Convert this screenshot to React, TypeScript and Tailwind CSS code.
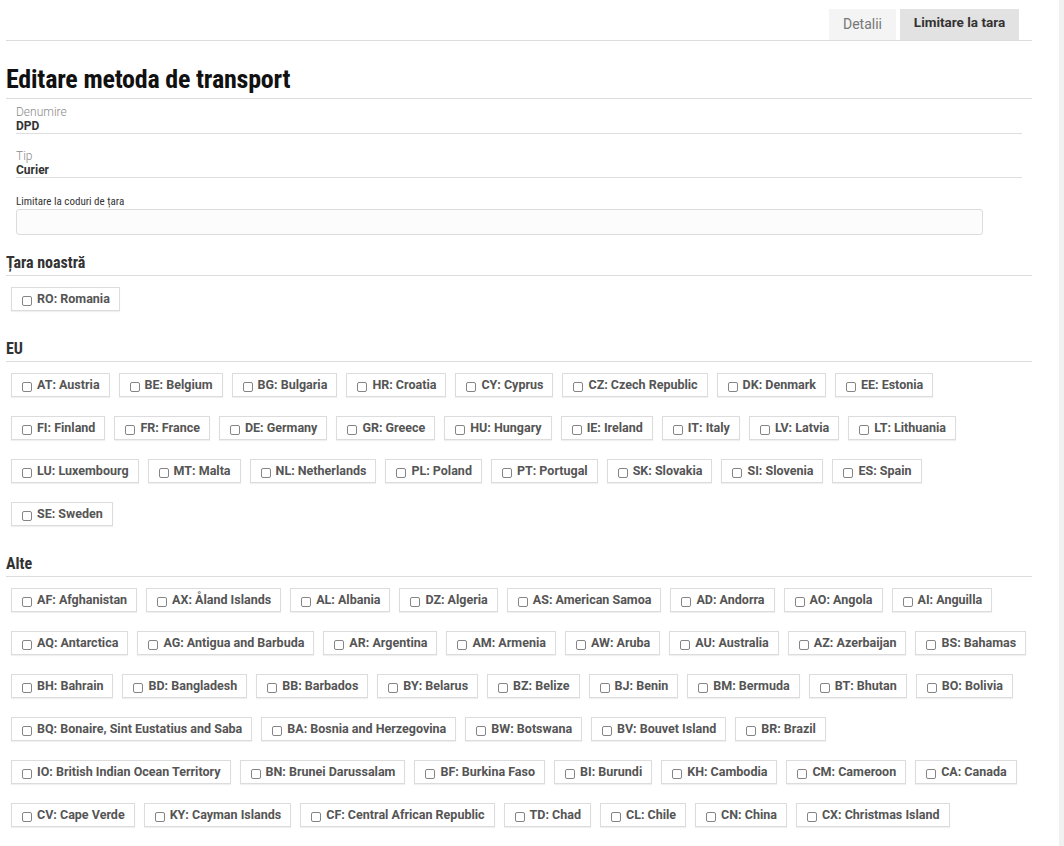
import React from 'react';

type Section = {
  title: string;
  rows: string[][];
};

const sections: Section[] = [
  {
    title: 'Țara noastră',
    rows: [['RO: Romania']],
  },
  {
    title: 'EU',
    rows: [
      ['AT: Austria', 'BE: Belgium', 'BG: Bulgaria', 'HR: Croatia', 'CY: Cyprus', 'CZ: Czech Republic', 'DK: Denmark', 'EE: Estonia'],
      ['FI: Finland', 'FR: France', 'DE: Germany', 'GR: Greece', 'HU: Hungary', 'IE: Ireland', 'IT: Italy', 'LV: Latvia', 'LT: Lithuania'],
      ['LU: Luxembourg', 'MT: Malta', 'NL: Netherlands', 'PL: Poland', 'PT: Portugal', 'SK: Slovakia', 'SI: Slovenia', 'ES: Spain'],
      ['SE: Sweden'],
    ],
  },
  {
    title: 'Alte',
    rows: [
      ['AF: Afghanistan', 'AX: Åland Islands', 'AL: Albania', 'DZ: Algeria', 'AS: American Samoa', 'AD: Andorra', 'AO: Angola', 'AI: Anguilla'],
      ['AQ: Antarctica', 'AG: Antigua and Barbuda', 'AR: Argentina', 'AM: Armenia', 'AW: Aruba', 'AU: Australia', 'AZ: Azerbaijan', 'BS: Bahamas'],
      ['BH: Bahrain', 'BD: Bangladesh', 'BB: Barbados', 'BY: Belarus', 'BZ: Belize', 'BJ: Benin', 'BM: Bermuda', 'BT: Bhutan', 'BO: Bolivia'],
      ['BQ: Bonaire, Sint Eustatius and Saba', 'BA: Bosnia and Herzegovina', 'BW: Botswana', 'BV: Bouvet Island', 'BR: Brazil'],
      ['IO: British Indian Ocean Territory', 'BN: Brunei Darussalam', 'BF: Burkina Faso', 'BI: Burundi', 'KH: Cambodia', 'CM: Cameroon', 'CA: Canada'],
      ['CV: Cape Verde', 'KY: Cayman Islands', 'CF: Central African Republic', 'TD: Chad', 'CL: Chile', 'CN: China', 'CX: Christmas Island'],
    ],
  },
];

const narrow = "font-['Liberation_Sans_Narrow','Roboto_Condensed','Liberation_Sans',sans-serif]";

function CountryChip({ label }: { label: string }) {
  return (
    <label className="flex h-[24px] items-center border border-[#dcdcdc] bg-white pl-[10px] pr-[9px] shadow-[0_1px_1px_rgba(0,0,0,0.06)]">
      <span className="mr-[5px] mt-[3px] h-[10px] w-[10px] rounded-[2px] border border-[#858585] bg-white" />
      <span className="whitespace-nowrap text-[12.5px] font-bold leading-none text-[#555]">{label}</span>
    </label>
  );
}

function Field({ label, value }: { label: string; value: string }) {
  return (
    <div className="ml-[10px] mr-[10px] border-b border-[#dedede] pt-[6px]">
      <div className="text-[12px] font-light leading-[14px] text-[#8a8a8a]">{label}</div>
      <div className="text-[12px] font-bold leading-[14px] text-[#333]">{value}</div>
    </div>
  );
}

export default function App() {
  return (
    <div className="flex h-[846px] w-[1064px] overflow-hidden bg-white font-['Roboto',sans-serif]">
      <div className="flex-1 pl-[6px] pr-[27px]">
        {/* tabs */}
        <div className="flex justify-end border-b border-[#dddddd] pr-[13px] pt-[9px]">
          <div className="flex h-[31px] w-[67px] items-center justify-center bg-[#f4f4f4] text-[14px] text-[#777]">Detalii</div>
          <div className="ml-[4px] flex h-[31px] w-[119px] items-center justify-center bg-[#e2e2e2] pb-[5px] text-[13.5px] font-bold text-[#333]">
            Limitare la tara
          </div>
        </div>

        <h1 className={`${narrow} border-b border-[#dddddd] pb-[3px] pt-[22px] text-[26px] font-bold leading-[32px] tracking-[-0.2px] text-[#111]`}>
          Editare metoda de transport
        </h1>

        <Field label="Denumire" value="DPD" />
        <div className="h-[9px]" />
        <Field label="Tip" value="Curier" />

        <div className="ml-[10px] pt-[18px]">
          <div className={`${narrow} text-[11px] leading-[12px] text-[#333]`}>Limitare la coduri de țara</div>
          <div className="mt-[1px] h-[26px] w-[967px] rounded-[3px] border border-[#dcdcdc] bg-[#fcfcfc]" />
        </div>

        {sections.map((section, i) => (
          <div key={section.title} className={i === 0 ? 'pt-[18px]' : 'pt-[28px]'}>
            <h2 className={`${narrow} border-b border-[#dddddd] pb-[2px] text-[16px] font-bold leading-[20px] text-[#333]`}>
              {section.title}
            </h2>
            <div className="flex flex-col gap-[19px] pl-[5px] pt-[11px]">
              {section.rows.map((row, r) => (
                <div key={r} className="flex gap-[9px]">
                  {row.map((c) => (
                    <CountryChip key={c} label={c} />
                  ))}
                </div>
              ))}
            </div>
          </div>
        ))}
      </div>
      <div className="w-[5px] bg-[#f1f1f1]" />
    </div>
  );
}
